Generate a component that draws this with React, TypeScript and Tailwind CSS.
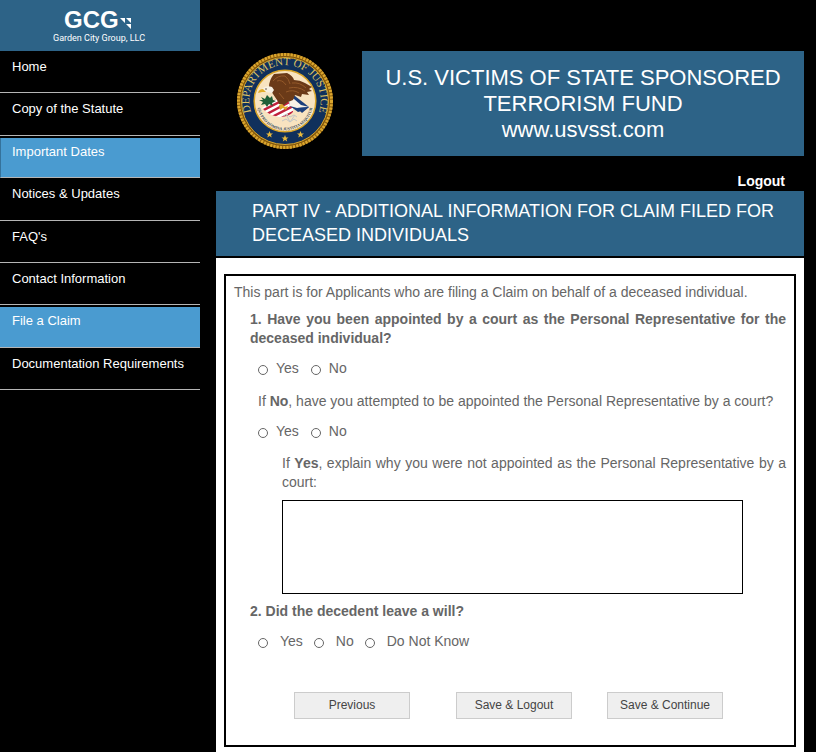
import React from "react";

type NavItem = { label: string; active?: boolean; focused?: boolean };

const navItems: NavItem[] = [
  { label: "Home" },
  { label: "Copy of the Statute" },
  { label: "Important Dates", active: true, focused: true },
  { label: "Notices & Updates" },
  { label: "FAQ's" },
  { label: "Contact Information" },
  { label: "File a Claim", active: true },
  { label: "Documentation Requirements" },
];

function Logo() {
  return (
    <svg className="block overflow-visible" width="94" height="40" viewBox="0 0 94 40" role="img" aria-label="GCG Garden City Group, LLC">
      <g fill="#fff">
        <text x="11" y="20" fontSize="24" fontWeight="bold" fontFamily="Liberation Sans, Arial, sans-serif">GCG</text>
        <text x="0" y="33" fontSize="9" fontFamily="Liberation Sans Narrow, Roboto, sans-serif">Garden City Group, LLC</text>
        <path d="M67 10h5v5zM73 10h5v5zM73 16h5v5z" />
      </g>
    </svg>
  );
}

const STAR = "M0-3.500 1-1.100 3.500-1 1.500.6 2.200 3 0 1.600-2.200 3-1.500.6-3.500-1-1-1.100z";

function Seal() {
  return (
    <svg className="block" width="98" height="98" viewBox="-49 -49 98 98" role="img" aria-label="Department of Justice seal">
      <defs>
        <path id="sealTop" d="M-30.900 17.800A35.700 35.700 0 1 1 30.900 17.800" />
        <path id="sealMotto" d="M-27.500-4A28 28 0 1 0 27.500-4" />
        <clipPath id="shield">
          <path d="M-23 7-11-1 0-3 8 6 8 11Q4 16-6 16-17 14-23 7z" />
        </clipPath>
      </defs>
      <circle r="48" fill="#8f6210" />
      <circle r="46.500" fill="none" stroke="#dba62e" strokeWidth="3" strokeDasharray="2.200 1.100" />
      <circle r="44.300" fill="none" stroke="#7b500b" strokeWidth="1" />
      <circle r="43.500" fill="#10305c" stroke="#d9a52a" strokeWidth="1" />
      <circle r="30.800" fill="#f8e3c0" stroke="#d9a52a" strokeWidth="1.500" />
      <text fill="#dfc263" fontSize="11" fontFamily="Liberation Serif, serif">
        <textPath href="#sealTop" startOffset="50%" textAnchor="middle">DEPARTMENT OF JUSTICE</textPath>
      </text>
      <g clipPath="url(#shield)">
        <path d="M-25-5H10V20H-25z" fill="#fff" />
        <path d="M-26 6 6-11M-25 11 8-6M-22 15 10-2M-17 18 12 3M-9 20 12 9" stroke="#c0203c" strokeWidth="2.400" />
      </g>
      <path d="M3-8 10-5 24 6 20 9 13 11 5 5z" fill="#1c3f7c" />
      <path d="M3-5 9-2 16 4 24 6 12 7 5 5z" fill="#f7f1e6" />
      <path d="M12 7 24 6 17 12z" fill="#1c3f7c" />
      <path d="M-24-4-20-2-18-6-15-3-13-5-12-1-9 0-13 2-12 5-16 3-18 6-20 3-24 4-22 1-26-1-22-1z" fill="#1f5f38" />
      <path d="M-16-14Q-16-21-11-27L2-28Q8-25 9-21 15-21 20-18L27-14 24-12 27-10 22-9 24-6 17-7 16-4 10-6 8-1 3 1-1 4-6 3-8-1-12-7z" fill="#6b3a18" />
      <path d="M-12-20Q-7-26 0-25 4-22 5-17M-8-20Q-3-22 1-16M7-18Q15-19 21-13M4-13Q13-15 20-10M1-9Q8-12 14-8M-6-8-1-2" fill="none" stroke="#94592a" strokeWidth="1" />
      <path d="M-13-14Q-18-16-22-13L-25-10-19-9-13-8-11-11z" fill="#f7f0e2" />
      <path d="M-22-12Q-26-12-27-8L-23-9-19-9z" fill="#e2ad2b" />
      <circle cx="-19" cy="-12" r=".7" fill="#382414" />
      <path d="M-6 4-3 3 0 6 3 5 1 9-2 7-5 9z" fill="#dda629" />
      <path d="M-2 15 2 13 5 16 9 14 12 16M-3 20 1 18 5 21 9 18 12 20M1 13 5 21 10 14" fill="none" stroke="#c3c6c6" strokeWidth="1" />
      <text fill="#33495c" fontSize="4" fontWeight="bold" fontFamily="Liberation Serif, serif">
        <textPath href="#sealMotto" startOffset="50%" textAnchor="middle">QUI PRO DOMINA JUSTITIA SEQUITUR</textPath>
      </text>
      <g fill="#e8b93c">
        <path d={STAR} transform="translate(-15.500 33.500)" />
        <path d={STAR} transform="translate(0 37.500)" />
        <path d={STAR} transform="translate(15.500 33.500)" />
      </g>
    </svg>
  );
}

function RadioRow({ name, legend, options, wide }: { name: string; legend: string; options: string[]; wide?: boolean }) {
  return (
    <div role="radiogroup" aria-label={legend} className={wide ? "flex gap-[11px] px-2" : "flex gap-3 px-2"}>
      {options.map((option) => (
        <label key={option} className={wide ? "flex items-center gap-3" : "flex items-center gap-2"}>
          <input
            type="radio"
            name={name}
            className="mt-[3px] size-[10px] appearance-none rounded-full border border-[#666] bg-white checked:border-[3px]"
          />
          {option}
        </label>
      ))}
    </div>
  );
}

function ActionButton({ children }: { children: React.ReactNode }) {
  return (
    <button type="button" className="h-[27px] w-[116px] border border-[#ccc] bg-[#efefef] pb-px text-[12px] text-[#444]">
      {children}
    </button>
  );
}

export default function App() {
  return (
    <div className="flex min-h-screen bg-black font-['Liberation_Sans',Arial,sans-serif]">
      <aside className="w-[200px] shrink-0">
        <div className="flex h-[51px] items-start justify-center bg-[#2d6387] pt-2">
          <Logo />
        </div>
        <nav className="grid h-[339px] auto-rows-fr text-[13px] leading-4 text-white">
          {navItems.map((item) => (
            <a
              key={item.label}
              href="#"
              className={`border-b border-[#b5b5b5] ${item.focused ? "border-l border-l-[#35729b]" : ""} ${item.active ? "mt-0.5 bg-[#4a9bd0] pt-1.5" : "pt-2"}`}
            >
              <span className={item.focused ? "block pl-[11px]" : "block pl-3"}>{item.label}</span>
            </a>
          ))}
        </nav>
      </aside>

      <main className="mr-3 ml-4 flex min-w-0 flex-1 flex-col">
        <header className="flex pt-[51px]">
          <div className="w-[146px] shrink-0 pt-px pl-5">
            <Seal />
          </div>
          <h1 className="h-[105px] flex-1 bg-[#2d6387] pt-[14px] text-center text-[22px] leading-[26px] text-white">
            U.S. VICTIMS OF STATE SPONSORED TERRORISM FUND
            <br />
            www.usvsst.com
          </h1>
        </header>
        <div className="flex h-[35px] items-end justify-end pr-[19px] pb-px">
          <a href="#" className="text-[14px] leading-[18px] font-bold text-white">Logout</a>
        </div>
        <h2 className="h-[65px] bg-[#2d6387] pt-2 pr-5 pl-9 text-[18px] leading-6 text-white">
          PART IV - ADDITIONAL INFORMATION FOR CLAIM FILED FOR DECEASED INDIVIDUALS
        </h2>
        <div className="mt-0.5 flex-1 bg-white px-2 pt-4 pb-[5px]">
          <form className="border-2 border-black px-2 pt-[7px] pb-[26px] text-[14px] leading-[19px] text-[#666]">
            <p>This part is for Applicants who are filing a Claim on behalf of a deceased individual.</p>
            <div className="pl-4">
              <p className="mt-2 text-justify font-bold">
                1. Have you been appointed by a court as the Personal Representative for the deceased individual?
              </p>
              <div className="mt-[11px]">
                <RadioRow name="appointed" legend="Appointed by a court" options={["Yes", "No"]} />
              </div>
              <p className="mt-[14px] pl-2">
                If <b>No</b>, have you attempted to be appointed the Personal Representative by a court?
              </p>
              <div className="mt-[11px]">
                <RadioRow name="attempted" legend="Attempted to be appointed" options={["Yes", "No"]} />
              </div>
              <div className="mt-[13px] pl-8">
                <label htmlFor="explain" className="block text-justify">
                  If <b>Yes</b>, explain why you were not appointed as the Personal Representative by a court:
                </label>
                <div className="mt-2 pr-[43px]">
                  <textarea id="explain" className="block h-[94px] w-full resize-none border border-black bg-white p-1" />
                </div>
              </div>
              <p className="mt-2 font-bold">2. Did the decedent leave a will?</p>
              <div className="mt-[11px]">
                <RadioRow name="will" legend="Did the decedent leave a will" options={["Yes", "No", "Do Not Know"]} wide />
              </div>
            </div>
            <div className="mt-[41px] flex pl-[60px]">
              <div className="mr-[46px]">
                <ActionButton>Previous</ActionButton>
              </div>
              <div className="mr-[35px]">
                <ActionButton>Save &amp; Logout</ActionButton>
              </div>
              <ActionButton>Save &amp; Continue</ActionButton>
            </div>
          </form>
        </div>
      </main>
    </div>
  );
}
